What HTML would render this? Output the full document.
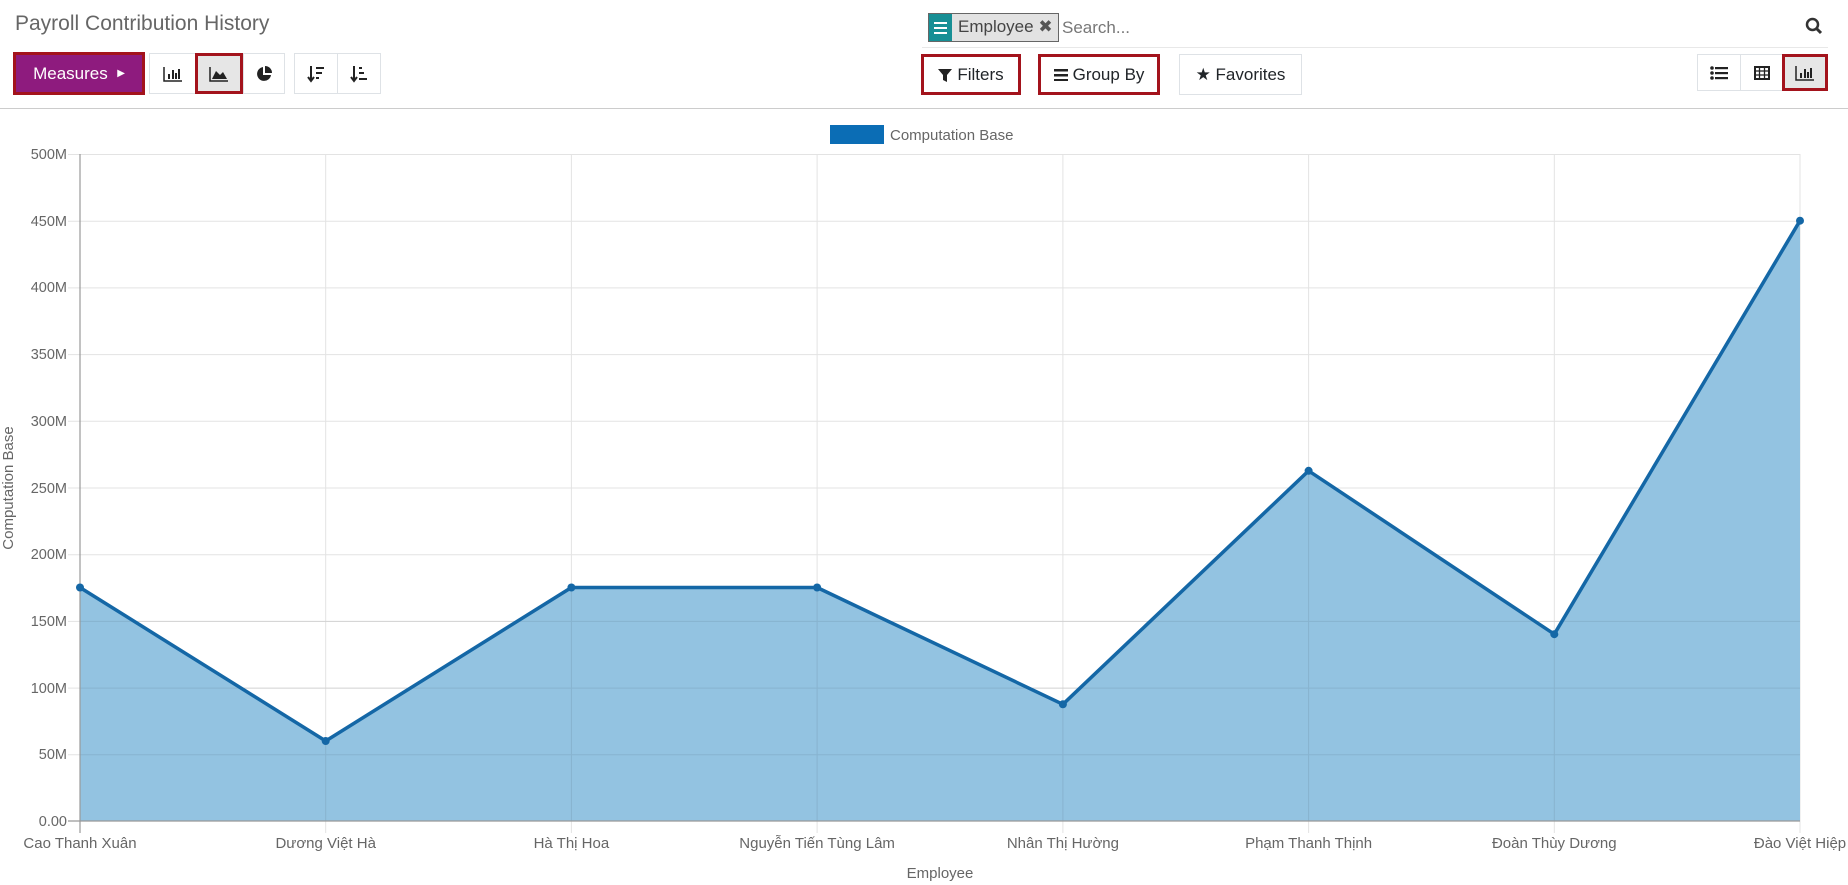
<!DOCTYPE html>
<html><head><meta charset="utf-8"><style>
*{box-sizing:border-box;margin:0;padding:0}
body{width:1848px;height:885px;background:#fff;font-family:"Liberation Sans",sans-serif;position:relative;overflow:hidden;color:#212529}
.a{position:absolute}
.btn{position:absolute;border:1px solid #dee2e6;background:#fff;display:flex;align-items:center;justify-content:center;font-size:17px;color:#212529}
.red{border:3px solid #a3131c}
</style></head><body>
<div class="a" style="left:15px;top:12px;font-size:21px;color:#666">Payroll Contribution History</div>

<div class="btn red" style="left:13px;top:52px;width:132px;height:43px;background:#8e1b7e;color:#fff;font-size:17px">Measures&nbsp;&nbsp;<span style="font-size:10px">&#9654;</span></div>

<div class="btn" style="left:149px;top:53px;width:47px;height:41px"><svg width="20" height="16"><path d="M1 1v14h18" stroke="#222" stroke-width="1.5" fill="none"/><rect x="5" y="8" width="2" height="5" fill="#222"/><rect x="9" y="4" width="2" height="9" fill="#222"/><rect x="12" y="7" width="2" height="6" fill="#222"/><rect x="15" y="3" width="2" height="10" fill="#222"/></svg></div>
<div class="btn red" style="left:195px;top:53px;width:48px;height:41px;background:#e6e6e6"><svg width="20" height="16"><path d="M1 1v14h18" stroke="#222" stroke-width="1.5" fill="none"/><path d="M3 13L7 5L11 9L14 6L18 13Z" fill="#222"/></svg></div>
<div class="btn" style="left:243px;top:53px;width:42px;height:41px"><svg width="18" height="18"><path d="M8 2A7 7 0 1 0 16 10H8Z" fill="#222"/><path d="M10 1A7 7 0 0 1 17 8H10Z" fill="#222"/></svg></div>

<div class="btn" style="left:294px;top:53px;width:44px;height:41px"><svg width="18" height="20"><path d="M4 2v14M1 13l3 4 3-4" stroke="#222" stroke-width="2" fill="none"/><rect x="9" y="3" width="8" height="2" fill="#222"/><rect x="9" y="8" width="6" height="2" fill="#222"/><rect x="9" y="13" width="3" height="2" fill="#222"/></svg></div>
<div class="btn" style="left:337px;top:53px;width:44px;height:41px"><svg width="18" height="20"><path d="M4 2v14M1 13l3 4 3-4" stroke="#222" stroke-width="2" fill="none"/><rect x="9" y="3" width="3" height="2" fill="#222"/><rect x="9" y="8" width="5" height="2" fill="#222"/><rect x="9" y="14" width="8" height="2" fill="#222"/></svg></div>

<div class="a" style="left:928px;top:13px;width:131px;height:29px;border:1px solid #666;background:#e2e2e2"></div>
<div class="a" style="left:929px;top:14px;width:23px;height:27px;background:#178f95;display:flex;flex-direction:column;justify-content:center;align-items:center;gap:3px"><div style="width:13px;height:2px;background:#fff"></div><div style="width:13px;height:2px;background:#fff"></div><div style="width:13px;height:2px;background:#fff"></div></div>
<div class="a" style="left:958px;top:17px;font-size:17px;color:#444">Employee <span style="color:#555">&#10006;</span></div>
<div class="a" style="left:1062px;top:18px;font-size:17px;color:#777">Search...</div>
<div class="a" style="left:922px;top:47px;width:906px;height:1px;background:#e8e8e8"></div>
<svg class="a" style="left:1805px;top:17px" width="18" height="18"><circle cx="7.5" cy="7.5" r="5.5" stroke="#333" stroke-width="2.5" fill="none"/><path d="M11.5 11.5L16 16" stroke="#333" stroke-width="3"/></svg>

<div class="btn red" style="left:921px;top:54px;width:100px;height:41px"><svg width="14" height="14" style="margin-right:5px"><path d="M0 1h14L9 7v7L5 12V7Z" fill="#222"/></svg>Filters</div>
<div class="btn red" style="left:1038px;top:54px;width:122px;height:41px"><svg width="14" height="12" style="margin-right:5px"><rect y="0" width="14" height="2.5" fill="#222"/><rect y="5" width="14" height="2.5" fill="#222"/><rect y="10" width="14" height="2.5" fill="#222"/></svg>Group By</div>
<div class="btn" style="left:1179px;top:54px;width:123px;height:41px">&#9733;&nbsp;Favorites</div>

<div class="btn" style="left:1697px;top:54px;width:44px;height:37px"><svg width="18" height="14"><circle cx="2" cy="2" r="1.8" fill="#222"/><circle cx="2" cy="7" r="1.8" fill="#222"/><circle cx="2" cy="12" r="1.8" fill="#222"/><rect x="5" y="1" width="13" height="2.2" fill="#222"/><rect x="5" y="6" width="13" height="2.2" fill="#222"/><rect x="5" y="11" width="13" height="2.2" fill="#222"/></svg></div>
<div class="btn" style="left:1740px;top:54px;width:43px;height:37px"><svg width="16" height="14"><rect x="1" y="1" width="14" height="12" fill="none" stroke="#222" stroke-width="2"/><path d="M1 5h14M1 9h14M5.5 1v12M10.5 1v12" stroke="#222" stroke-width="1.3"/></svg></div>
<div class="btn red" style="left:1782px;top:54px;width:46px;height:37px;background:#e6e6e6"><svg width="20" height="16"><path d="M1 1v14h18" stroke="#222" stroke-width="1.5" fill="none"/><rect x="5" y="8" width="2" height="5" fill="#222"/><rect x="9" y="4" width="2" height="9" fill="#222"/><rect x="12" y="7" width="2" height="6" fill="#222"/><rect x="15" y="3" width="2" height="10" fill="#222"/></svg></div>

<div class="a" style="left:0;top:108px;width:1848px;height:1px;background:#ccc"></div>

<svg class="a" style="left:0;top:0" width="1848" height="885" font-family="Liberation Sans, sans-serif" font-size="14" fill="#666">
<rect x="830" y="125" width="54" height="19" fill="#0b6db5"/>
<text x="890" y="140" font-size="15">Computation Base</text>
<g stroke="#e3e3e3" stroke-width="1">
<path d="M68 154.5H1800M68 221.2H1800M68 287.9H1800M68 354.6H1800M68 421.3H1800M68 488H1800M68 554.7H1800M68 621.4H1800M68 688.1H1800M68 754.8H1800"/>
<path d="M325.7 154V833M571.4 154V833M817.1 154V833M1062.9 154V833M1308.6 154V833M1554.3 154V833M1800 154V833"/>
</g>
<path d="M80 587.5L325.7 741L571.4 587.5L817.1 587.5L1062.9 704.3L1308.6 470.8L1554.3 634.2L1800 220.7L1800 821L80 821Z" fill="#93c3e1"/>
<g stroke="rgba(0,0,0,0.08)"><path d="M325.7 741V821M571.4 587.5V821M817.1 587.5V821M1062.9 704.3V821M1308.6 470.8V821M1554.3 634.2V821M80 688.1H1800M80 754.8H1800M80 621.4H1800"/></g>
<path d="M80 154V833M68 821H1800" stroke="#999" stroke-width="1.2"/>
<path d="M80 587.5L325.7 741L571.4 587.5L817.1 587.5L1062.9 704.3L1308.6 470.8L1554.3 634.2L1800 220.7" fill="none" stroke="#1467a6" stroke-width="3.5" stroke-linejoin="round"/>
<g fill="#1467a6"><circle cx="80" cy="587.5" r="4"/><circle cx="325.7" cy="741" r="4"/><circle cx="571.4" cy="587.5" r="4"/><circle cx="817.1" cy="587.5" r="4"/><circle cx="1062.9" cy="704.3" r="4"/><circle cx="1308.6" cy="470.8" r="4"/><circle cx="1554.3" cy="634.2" r="4"/><circle cx="1800" cy="220.7" r="4"/></g>
<g text-anchor="end" font-size="14.5">
<text x="67" y="159">500M</text><text x="67" y="226">450M</text><text x="67" y="292">400M</text><text x="67" y="359">350M</text><text x="67" y="426">300M</text><text x="67" y="493">250M</text><text x="67" y="559">200M</text><text x="67" y="626">150M</text><text x="67" y="693">100M</text><text x="67" y="759">50M</text><text x="67" y="826">0.00</text>
</g>
<g text-anchor="middle" font-size="15">
<text x="80" y="848">Cao Thanh Xuân</text><text x="325.7" y="848">Dương Việt Hà</text><text x="571.4" y="848">Hà Thị Hoa</text><text x="817.1" y="848">Nguyễn Tiến Tùng Lâm</text><text x="1062.9" y="848">Nhân Thị Hường</text><text x="1308.6" y="848">Phạm Thanh Thịnh</text><text x="1554.3" y="848">Đoàn Thùy Dương</text><text x="1800" y="848">Đào Việt Hiệp</text>
<text x="940" y="878">Employee</text>
<text transform="translate(13 488) rotate(-90)">Computation Base</text>
</g>
</svg>
</body></html>
